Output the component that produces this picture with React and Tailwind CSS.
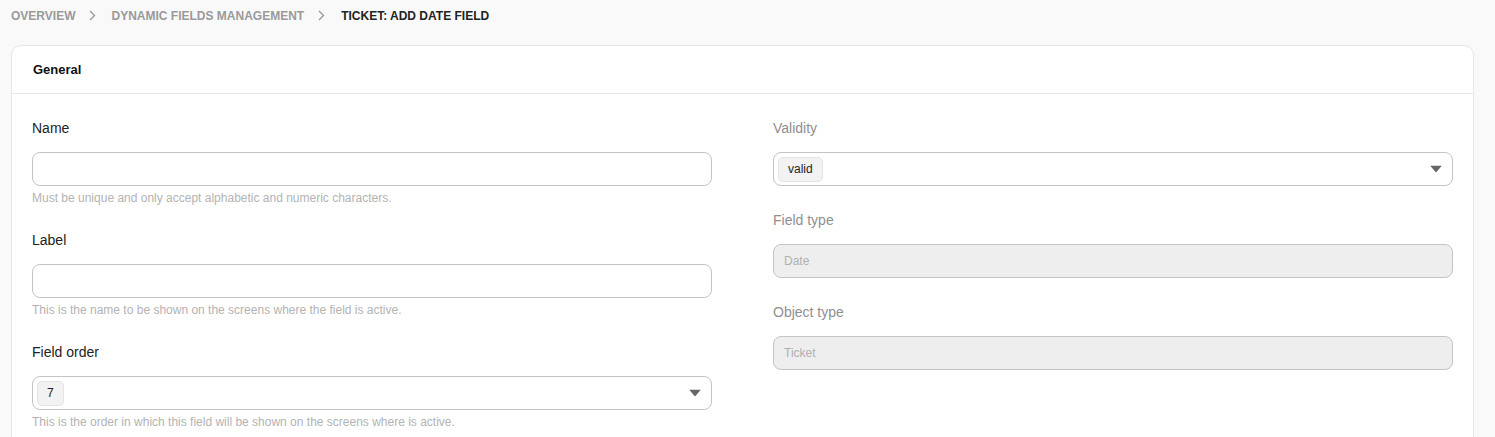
import React from "react";

const Caret = () => (
  <svg width="12" height="7" viewBox="0 0 12 7" className="absolute right-[10px] top-1/2 -translate-y-1/2">
    <path d="M0 0 L12 0 L6 7 Z" fill="#666666" />
  </svg>
);

const Chevron = () => (
  <svg width="7" height="11" viewBox="0 0 7 11" className="mx-[14px]">
    <path d="M1 1 L5.5 5.5 L1 10" fill="none" stroke="#9a9a9a" strokeWidth="1.4" />
  </svg>
);

const Chip = ({ children }) => (
  <span className="inline-flex items-center h-[25px] px-[9px] rounded-[5px] bg-[#f2f2f2] border border-[#e4e4e4] text-[12px] text-[#222]">
    {children}
  </span>
);

const Field = ({ label, help, muted, children }) => (
  <div className={help ? "mb-[25px]" : "mb-[24px]"}>
    <div className={`h-[20px] leading-[20px] text-[14px] mb-[14px] ${muted ? "text-[#8f8f8f]" : "text-[#222]"}`}>{label}</div>
    {children}
    {help && <p className="mt-[5px] text-[12px] leading-[14px] text-[#b3b3b3]">{help}</p>}
  </div>
);

const TextInput = () => (
  <div className="h-[34px] rounded-[8px] border border-[#c6c4be] bg-white" />
);

const SelectInput = ({ value }) => (
  <div className="relative h-[34px] rounded-[8px] border border-[#c6c4be] bg-white flex items-center pl-[4px]">
    <Chip>{value}</Chip>
    <Caret />
  </div>
);

const DisabledInput = ({ value }) => (
  <div className="h-[34px] rounded-[8px] border border-[#c6c4be] bg-[#eeeeee] flex items-center px-[10px] text-[12px] text-[#b0b0b0]">
    {value}
  </div>
);

export default function App() {
  return (
    <div className="min-h-[437px] bg-[#f9f9f9] font-['Liberation_Sans',Arial,sans-serif] overflow-hidden">
      {/* Breadcrumb */}
      <nav className="h-[45px] pl-[11px] flex items-center pb-[14px] text-[12px] font-bold uppercase">
        <span className="text-[#9a9a9a]">Overview</span>
        <Chevron />
        <span className="text-[#9a9a9a] ml-[1px]">Dynamic Fields Management</span>
        <Chevron />
        <span className="text-[#222] ml-[2px]">Ticket: Add Date Field</span>
      </nav>

      {/* Card */}
      <div className="ml-[11px] mr-[21px] bg-white border border-[#e6e6e6] rounded-[10px] min-h-[400px]">
        <div className="h-[48px] px-[21px] flex items-center border-b border-[#e6e6e6]">
          <h2 className="text-[13px] font-bold text-[#111]">General</h2>
        </div>
        <div className="px-[20px] pt-[24px] grid grid-cols-2 gap-x-[61px]">
          <div>
            <Field label="Name" help="Must be unique and only accept alphabetic and numeric characters.">
              <TextInput />
            </Field>
            <Field label="Label" help="This is the name to be shown on the screens where the field is active.">
              <TextInput />
            </Field>
            <Field label="Field order" help="This is the order in which this field will be shown on the screens where is active.">
              <SelectInput value="7" />
            </Field>
          </div>
          <div>
            <Field label="Validity" muted>
              <SelectInput value="valid" />
            </Field>
            <Field label="Field type" muted>
              <DisabledInput value="Date" />
            </Field>
            <Field label="Object type" muted>
              <DisabledInput value="Ticket" />
            </Field>
          </div>
        </div>
      </div>
    </div>
  );
}
